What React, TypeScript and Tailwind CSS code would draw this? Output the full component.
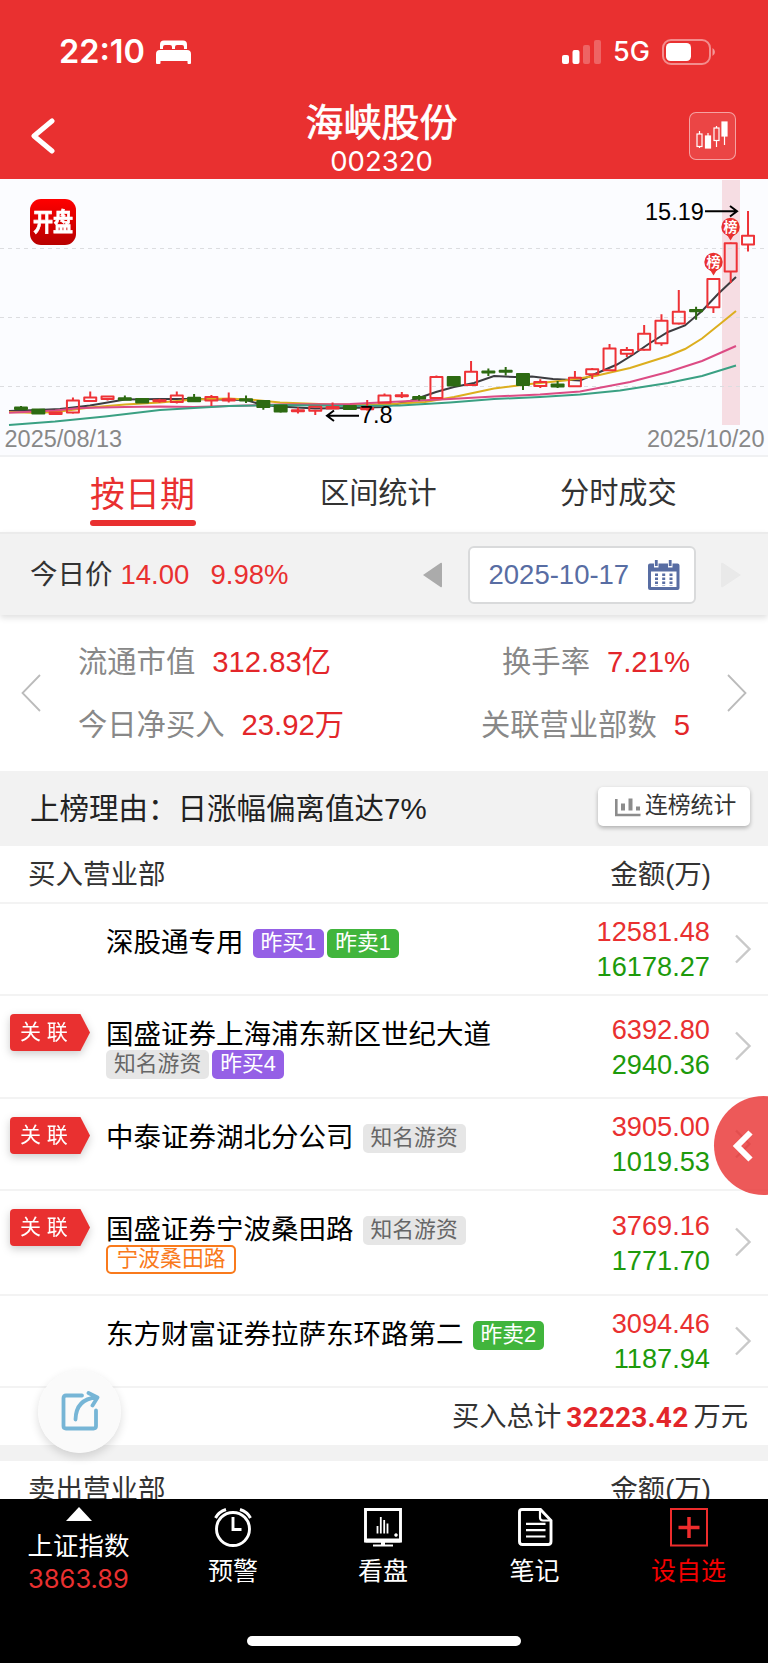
import React from 'react';

interface Candle {
  top: number;
  bottom: number;
  high: number;
  low: number;
  up: boolean;
}

interface Tag {
  text: string;
  kind: 'buy' | 'sell' | 'known' | 'group';
}

interface Seat {
  name: string;
  linked: boolean;
  inlineTags: Tag[];
  belowTags: Tag[];
  buy: string;
  sell: string;
  height: string;
}

const c = (up: boolean, top: number, bottom: number, high = top, low = bottom): Candle => ({
  up,
  top,
  bottom,
  high,
  low,
});

const candles: Candle[] = [
  c(false, 227.5, 229, 226, 230),
  c(false, 229.5, 233.5),
  c(true, 232.5, 234),
  c(true, 220.5, 232.5, 217.5, 233.5),
  c(true, 217.5, 221, 211.5, 222),
  c(true, 216.5, 219, 216, 220.5),
  c(false, 218.3, 219.7, 215.5, 220),
  c(false, 219, 222.5),
  c(true, 220.3, 221.3, 218.7, 222.7),
  c(true, 215.5, 222, 211.5, 223.5),
  c(false, 217.7, 221.3, 214, 222),
  c(true, 217, 220.5, 215, 226),
  c(true, 219.3, 220.5, 212.5, 222.5),
  c(false, 219.2, 220.4, 215.5, 223),
  c(false, 221, 227, 220, 229.7),
  c(false, 225.5, 231.5, 225, 232.5),
  c(true, 230.3, 231.3, 227.5, 233.5),
  c(true, 226.7, 230.7, 226, 235),
  c(true, 227, 228.5, 222.5, 229),
  c(false, 226, 229),
  c(true, 228, 229.3, 220, 230.5),
  c(true, 215.5, 222.7, 213.5, 223),
  c(true, 215.2, 216.2, 212, 218),
  c(false, 217, 218.5, 215, 220.5),
  c(true, 197, 218, 195.5, 219),
  c(false, 197, 205.5),
  c(true, 191.7, 205, 181, 206),
  c(false, 191.5, 192.5, 188.5, 196),
  c(false, 190.8, 191.8, 187, 195.5),
  c(false, 194, 205, 193, 210),
  c(true, 202, 206, 199.3, 208),
  c(false, 204.5, 206.5, 201, 208),
  c(true, 197.7, 206.3, 191, 207),
  c(true, 189.3, 194.3, 188, 199),
  c(true, 168.5, 190.3, 164, 191),
  c(true, 170, 173.7, 167, 177),
  c(true, 153.7, 169.7, 145, 170.5),
  c(true, 140.7, 163.3, 134.3, 165.7),
  c(true, 131.7, 143.5, 110, 144.5),
  c(false, 130, 131.3, 126.7, 139.7),
  c(true, 99, 127.3, 98, 133),
  c(true, 63.3, 91.5, 62.5, 103),
  c(true, 55.7, 64.5, 31, 71.5),
];

const averages = [
  {
    color: '#3c3c40',
    points:
      '9,231 38,230 60,229 90,225.5 125,219.5 160,219 194,219 246,220 263,225 280,226.5 315,228.5 350,228 384,227 410,221 436,212 454,207 474,203 494,196 515,197 532,196.5 553,199 580,200.5 595,194 617,184.5 634,174 650,163 668,152 685,145.5 702,131 718,114 736,97',
  },
  {
    color: '#dcae1e',
    points:
      '9,232 38,233 60,231.5 90,227.5 125,224.5 160,222.5 194,219.5 229,218.5 255,220 280,222.5 332,224.5 384,224.5 425,222 454,217 494,208.5 530,204 565,200.5 595,196 630,188 668,176 685,169 702,158.5 720,144 736,131',
  },
  {
    color: '#dc4b84',
    points:
      '9,232.7 55,230.5 80,228 125,227 160,226.5 194,227 229,226 280,224.5 350,224 400,221.5 450,219 494,216.5 540,214.5 580,211.5 630,202 668,192 702,181 736,166',
  },
  {
    color: '#3aa083',
    points:
      '9,245 55,241.5 105,236.5 160,230 194,228 229,226 280,225 350,226 400,225.5 450,222.5 494,219 540,217 580,214.5 620,210.5 668,203 702,196 736,185.5',
  },
];

const seats: Seat[] = [
  {
    name: '深股通专用',
    linked: false,
    inlineTags: [
      { text: '昨买1', kind: 'buy' },
      { text: '昨卖1', kind: 'sell' },
    ],
    belowTags: [],
    buy: '12581.48',
    sell: '16178.27',
    height: 'h-[92px]',
  },
  {
    name: '国盛证券上海浦东新区世纪大道',
    linked: true,
    inlineTags: [],
    belowTags: [
      { text: '知名游资', kind: 'known' },
      { text: '昨买4', kind: 'buy' },
    ],
    buy: '6392.80',
    sell: '2940.36',
    height: 'h-[103px]',
  },
  {
    name: '中泰证券湖北分公司',
    linked: true,
    inlineTags: [{ text: '知名游资', kind: 'known' }],
    belowTags: [],
    buy: '3905.00',
    sell: '1019.53',
    height: 'h-[92px]',
  },
  {
    name: '国盛证券宁波桑田路',
    linked: true,
    inlineTags: [{ text: '知名游资', kind: 'known' }],
    belowTags: [{ text: '宁波桑田路', kind: 'group' }],
    buy: '3769.16',
    sell: '1771.70',
    height: 'h-[105px]',
  },
  {
    name: '东方财富证券拉萨东环路第二',
    linked: false,
    inlineTags: [{ text: '昨卖2', kind: 'sell' }],
    belowTags: [],
    buy: '3094.46',
    sell: '1187.94',
    height: 'h-[92px]',
  },
];

const tagStyles = {
  buy: 'bg-[#9560e6] text-white px-2',
  sell: 'bg-[#41b53c] text-white px-2',
  known: 'bg-[#e6e6e6] text-[#666] px-2',
  group: 'border-2 border-[#f97a1c] text-[#f97a1c] bg-white px-[8.500px]',
};

const StatusBar: React.FC = () => (
  <div className="flex h-[104px] items-center px-[59px] text-white font-['Inter',sans-serif]">
    <span className="w-[86px] text-[32.500px] font-semibold leading-none">22:10</span>
    <svg className="ml-[11px]" width="35" height="24" viewBox="0 0 35 24" fill="#fff">
      <path d="M4 9V4.500a4 4 0 0 1 4-4h19a4 4 0 0 1 4 4V9h-3V7a2 2 0 0 0-2-2h-5a2 2 0 0 0-2 2v2h-3V7a2 2 0 0 0-2-2H9a2 2 0 0 0-2 2v2z" />
      <path d="M0 23V14a4 4 0 0 1 4-4h27a4 4 0 0 1 4 4v9a1 1 0 0 1-1 1h-1.500a1 1 0 0 1-1-1v-2h-27v2a1 1 0 0 1-1 1H1a1 1 0 0 1-1-1z" />
    </svg>
    <svg className="ml-auto" width="39" height="24" viewBox="0 0 39 24" fill="#fff">
      <rect x="0" y="15" width="7" height="9" rx="2" />
      <rect x="10.500" y="10" width="7" height="14" rx="2" />
      <rect x="21" y="5" width="7" height="19" rx="2" opacity=".25" />
      <rect x="32" y="0" width="7" height="24" rx="2" opacity=".25" />
    </svg>
    <span className="ml-3 w-9 text-[27px] font-medium leading-[30px]">5G</span>
    <svg className="ml-[13px] -mr-[7px]" width="54" height="26" viewBox="0 0 54 26">
      <rect x="1" y="1" width="47" height="24" rx="8" fill="none" stroke="#fff" strokeOpacity=".45" strokeWidth="2" />
      <rect x="4" y="4" width="25" height="18" rx="4.500" fill="#fff" />
      <path d="M50.500 9a4.500 4.500 0 0 1 0 8z" fill="#fff" fillOpacity=".5" />
    </svg>
  </div>
);

const TitleBar: React.FC = () => (
  <div className="flex h-[75px] items-start justify-between pl-[30px] pr-8 text-white">
    <svg className="mt-[14px]" width="44" height="36" viewBox="0 0 44 36" fill="none">
      <path d="M22 3L4 18l18 15" stroke="#fff" strokeWidth="5" strokeLinecap="round" strokeLinejoin="round" />
    </svg>
    <div className="flex flex-col items-center">
      <h1 className="-mt-[2px] text-[38px] leading-[42px] [-webkit-text-stroke:0.7px_white]">海峡股份</h1>
      <span className="mt-[2px] text-[27.500px] leading-[30px] font-['Inter',sans-serif]">002320</span>
    </div>
    <div className="mt-2 flex h-12 w-[47px] items-center justify-center rounded-[7px] border border-white/50 bg-white/10">
      <svg width="32" height="30" viewBox="0 0 32 30" fill="none" stroke="#fff" strokeWidth="1.200">
        <path d="M3.500 10v3M3.500 26v1M20.500 5v2M20.500 20v6M12 12v3M28.500 14v10" />
        <rect x="1" y="13" width="5" height="12.500" />
        <rect x="9.500" y="15" width="5" height="12" fill="#fff" />
        <rect x="18" y="7" width="5" height="12.500" />
        <rect x="26" y="1" width="5" height="14" fill="#fff" />
      </svg>
    </div>
  </div>
);

const ListMarker: React.FC<{ x: number; y: number }> = ({ x, y }) => (
  <g>
    <path d={`M${x - 4} ${y + 7}L${x} ${y + 13.5}L${x + 4} ${y + 7}z`} fill="#e93030" />
    <circle cx={x} cy={y} r="9.200" fill="#e93030" />
    <text
      x={x}
      y={y + 5}
      fontSize="14"
      fontWeight="700"
      textAnchor="middle"
      fill="#fff"
      fontFamily="Noto Sans CJK SC, sans-serif"
    >
      榜
    </text>
  </g>
);

const KLineChart: React.FC = () => (
  <div className="relative h-[278px] shrink-0 border-b-2 border-[#f0f1f3] bg-[#fbfcff] pt-px">
    <svg width="768" height="275" viewBox="0 0 768 275" fontFamily="Liberation Sans, sans-serif" fontSize="23.500">
      <rect x="722" y="0" width="18" height="245" fill="#f6dde3" />
      {[68.5, 137.5, 206.5].map((y) => (
        <line key={y} x1="0" x2="768" y1={y} y2={y} stroke="#dcdde0" strokeDasharray="4 4" />
      ))}
      {averages.map((line) => (
        <polyline key={line.color} points={line.points} fill="none" stroke={line.color} strokeWidth="2" />
      ))}
      {candles.map((candle, i) => {
        const x = 21 + i * 17.31;
        const color = candle.up ? '#ee3237' : '#2d6a12';
        return (
          <g key={i} stroke={color} strokeWidth="2">
            <path d={`M${x} ${candle.high}V${candle.top}M${x} ${candle.bottom}V${candle.low}`} />
            <rect
              x={x - 6}
              y={candle.top}
              width="12"
              height={candle.bottom - candle.top}
              fill={candle.up ? 'none' : color}
              strokeLinejoin="round"
            />
          </g>
        );
      })}
      <ListMarker x={713.5} y={82} />
      <ListMarker x={730.5} y={47} />
      <text x="645" y="39.500">15.19</text>
      <path d="M705 31.300H736M730 26L737 31.300L730 36.500" fill="none" stroke="#000" strokeWidth="2" />
      <text x="360" y="243.300">7.8</text>
      <path d="M359 235.700H328M334 230.500L327 235.700L334 241" fill="none" stroke="#000" strokeWidth="2" />
      <text x="4.500" y="267" fill="#888">2025/08/13</text>
      <text x="764.500" y="267" fill="#888" textAnchor="end">2025/10/20</text>
    </svg>
    <div className="absolute left-[30px] top-5 flex h-[46px] w-[46px] items-center justify-center rounded-[11px] bg-gradient-to-b from-[#ff0000] to-[#b80000] text-[20px] font-bold leading-none text-white">
      <span className="scale-y-125 whitespace-nowrap [-webkit-text-stroke:0.6px_white]">开盘</span>
    </div>
  </div>
);

const Tabs: React.FC = () => (
  <div className="flex h-[75px] shrink-0 bg-white pl-[90px] text-[29.200px] leading-[72px] text-[#333]">
    <div className="flex w-[106px] flex-col text-[35px] leading-[76px] text-[#e93030]">
      <span className="h-[63px]">按日期</span>
      <span className="h-[6px] rounded-full bg-[#e93030]" />
    </div>
    <span className="ml-[124px] w-[117px]">区间统计</span>
    <span className="ml-[123px]">分时成交</span>
  </div>
);

const DateBar: React.FC = () => (
  <div className="relative flex h-[83px] shrink-0 items-center border-t-2 border-[#ebebeb] bg-[#f2f2f2] pl-[30px] text-[28px] shadow-[0_3px_6px_rgba(0,0,0,0.12)]">
    <span className="text-[27.500px] text-[#333]">今日价</span>
    <span className="ml-2 w-[70px] text-[27.500px] text-[#e93030]">14.00</span>
    <span className="ml-5 w-[80px] text-[27.500px] text-[#e93030]">9.98%</span>
    <svg className="ml-[131px]" width="20" height="26" viewBox="0 0 20 26">
      <path d="M1 13L18.500 1Q20 0 20 2V24Q20 26 18.500 25z" fill="#ababab" />
    </svg>
    <div className="ml-[26px] flex h-[58px] w-[228px] items-center rounded-md border-2 border-[#d9dadb] bg-white pl-[19px] text-[#586da3]">
      <span className="w-[142px] text-[27.500px]">2025-10-17</span>
      <svg className="ml-[17px]" width="32" height="30" viewBox="0 0 32 30">
        <path
          d="M2 3.500H6V7.500H10.500V3.500H20V7.500H24.500V3.500H29.500Q31.500 3.500 31.500 5.500V28Q31.500 30 29.500 30H2Q0 30 0 28V5.500Q0 3.500 2 3.500zM3 11.500V27H28.500V11.500z"
          fill="#586da3"
          fillRule="evenodd"
        />
        <path d="M8.300 0V6M22.200 0V6" stroke="#586da3" strokeWidth="2.800" />
        <path d="M8.500 13.500V26M15.700 13.500V26M23 13.500V26" stroke="#586da3" strokeWidth="3" strokeDasharray="2.500 1.500" />
      </svg>
    </div>
    <svg className="ml-[25px]" width="21" height="26" viewBox="0 0 21 26">
      <path d="M0 2Q0 0 2 1L20 13L2 25Q0 26 0 24z" fill="#e9e9e9" />
    </svg>
  </div>
);

const Stat: React.FC<{ label: string; value: string }> = ({ label, value }) => (
  <div className="flex gap-[17px]">
    <span className="text-[#888]">{label}</span>
    <span className="text-[#e3262a]">{value}</span>
  </div>
);

const Stats: React.FC = () => (
  <div className="flex h-[156px] shrink-0 items-center justify-between bg-white px-[21px]">
    <svg width="20" height="38" viewBox="0 0 20 38" fill="none">
      <path d="M19 1L1.500 19L19 37" stroke="#bbb" strokeWidth="1.800" />
    </svg>
    <div className="mt-px flex w-[612px] flex-col gap-[23px] text-[29.300px] leading-[40px]">
      <div className="flex justify-between">
        <Stat label="流通市值" value="312.83亿" />
        <Stat label="换手率" value="7.21%" />
      </div>
      <div className="flex justify-between">
        <Stat label="今日净买入" value="23.92万" />
        <Stat label="关联营业部数" value="5" />
      </div>
    </div>
    <svg width="20" height="38" viewBox="0 0 20 38" fill="none">
      <path d="M1 1L18.500 19L1 37" stroke="#bbb" strokeWidth="1.800" />
    </svg>
  </div>
);

const ReasonBar: React.FC = () => (
  <div className="flex h-[75px] shrink-0 items-start justify-between bg-[#f2f2f2] pl-[30px] pr-[18px] text-[29.500px] text-[#222]">
    <span className="leading-[76px]">上榜理由：日涨幅偏离值达7%</span>
    <button className="mt-4 flex h-[39px] w-[152px] items-center rounded-[5px] bg-white pl-[17px] text-[22.800px] leading-none text-[#333] shadow-[0_2px_4px_rgba(0,0,0,0.28)]">
      <svg width="26" height="20" viewBox="0 0 26 20" fill="none" stroke="#8c8c8c">
        <path d="M1.300 2V18H25.500" strokeWidth="2.600" />
        <path d="M8 6.500V13.500M15.500 1.500V13.500M23 9.500V13.500" strokeWidth="4" />
      </svg>
      <span className="-mt-[2px] ml-1">连榜统计</span>
    </button>
  </div>
);

const SectionHeader: React.FC<{ title: string }> = ({ title }) => (
  <div className="flex h-[58px] shrink-0 justify-between border-b-2 border-[#f3f3f3] bg-white pl-[28px] pr-[57px] text-[27.500px] leading-[58px] text-[#333]">
    <span>{title}</span>
    <span>金额(万)</span>
  </div>
);

const TagBadge: React.FC<{ tag: Tag }> = ({ tag }) => (
  <span className={`flex h-[29px] items-center rounded-[5px] text-[21.800px] leading-none ${tagStyles[tag.kind]}`}>
    <span className="-mt-[2px]">{tag.text}</span>
  </span>
);

const LinkedFlag: React.FC = () => (
  <div className="mt-[18px] w-20 drop-shadow-[0_3px_4px_rgba(0,0,0,0.2)]">
    <div className="h-[37px] rounded-l-[4px] bg-[#e93030] pl-[10px] text-[21px] leading-[36px] text-white [clip-path:polygon(0_0,88%_0,100%_50%,88%_100%,0_100%)]">
      关 联
    </div>
  </div>
);

const SeatRow: React.FC<{ seat: Seat }> = ({ seat }) => (
  <div className={`flex shrink-0 border-b-2 border-[#f3f3f3] bg-white pl-[10px] ${seat.height}`}>
    <div className="w-24">{seat.linked && <LinkedFlag />}</div>
    <div className="flex flex-1 flex-col pt-[23px]">
      <div className="flex gap-[3px] text-[27.500px] leading-[31px] text-black">
        <span className="mr-[6px]">{seat.name}</span>
        {seat.inlineTags.map((tag) => (
          <div key={tag.text} className="pt-[2px]">
            <TagBadge tag={tag} />
          </div>
        ))}
      </div>
      <div className="flex gap-[3px]">
        {seat.belowTags.map((tag) => (
          <TagBadge key={tag.text} tag={tag} />
        ))}
      </div>
    </div>
    <div className="flex flex-col items-end justify-center text-[27.200px] leading-[35px]">
      <span className="text-[#e93030]">{seat.buy}</span>
      <span className="text-[#1d9a0b]">{seat.sell}</span>
    </div>
    <svg className="mb-px ml-6 mr-4 self-center" width="18" height="30" viewBox="0 0 18 30" fill="none">
      <path d="M2 1.500L15.500 15L2 28.500" stroke="#c9c9c9" strokeWidth="2.400" />
    </svg>
  </div>
);

const NavItem: React.FC<{ label: string; className: string; children: React.ReactNode }> = ({
  label,
  className,
  children,
}) => (
  <div className={`flex flex-col items-center pt-[8px] ${className}`}>
    <svg width="40" height="40" viewBox="0 0 40 40" fill="none" stroke="currentColor" strokeWidth="2.900">
      {children}
    </svg>
    <span className="mt-[6px] text-[25px] leading-[36px]">{label}</span>
  </div>
);

const BottomNav: React.FC = () => (
  <div className="relative flex h-[164px] shrink-0 flex-col bg-black text-white">
    <div className="flex h-[137px]">
      <div className="flex w-[157px] flex-col items-center pt-[8px]">
        <svg width="26" height="14" viewBox="0 0 26 14">
          <path d="M13 0L26 14H0z" fill="#fff" />
        </svg>
        <span className="mt-[7px] text-[25.500px] leading-[36px]">上证指数</span>
        <span className="text-[25.500px] leading-[29px] text-[#e93030] font-['Inter',sans-serif]">3863.89</span>
      </div>
      <NavItem label="预警" className="w-[152px]">
        <circle cx="20" cy="22" r="16.500" />
        <path d="M20 10V22.500H28.500" />
        <path d="M2.500 11Q5.500 5 13 2.500M37.500 11Q34.500 5 27 2.500" />
      </NavItem>
      <NavItem label="看盘" className="w-[148px]">
        <path d="M2.500 2.500H37.500V34H2.500z" />
        <path d="M2.500 33.500H37.500" strokeWidth="4" />
        <path d="M20 34V38" strokeWidth="4" />
        <path d="M10 38.500H30" strokeWidth="2" />
        <path d="M14.500 19V26.500M17.800 10V26.500M21.200 13V26.500M24.500 16.500V26.500" strokeWidth="1.800" />
        <circle cx="33" cy="28" r="1.500" fill="currentColor" strokeWidth="0.500" />
      </NavItem>
      <NavItem label="笔记" className="w-[155px]">
        <path d="M7 2.500H25.500L36 13.500V34.500Q36 37.500 33 37.500H7.500Q4.500 37.500 4.500 34.500V5Q4.500 2.500 7 2.500z" />
        <path d="M25 3V10.500Q25 13.500 28 13.500H36M11 16.800H30.500M11 23.200H30.500M11 29.500H30.500" strokeWidth="2.200" />
      </NavItem>
      <NavItem label="设自选" className="w-[153px] text-[#f50000]">
        <rect x="2" y="2" width="36" height="36.500" stroke="#ee2c2c" strokeWidth="2" />
        <path d="M20 10V31M9.500 20.500H30.500" stroke="#ee2c2c" strokeWidth="3.500" />
      </NavItem>
    </div>
    <div className="mx-auto h-[10px] w-[274px] rounded-full bg-white" />
  </div>
);

const App: React.FC = () => {
  return (
    <div className="relative flex h-[1663px] w-[768px] flex-col overflow-hidden bg-white font-['Liberation_Sans','Noto_Sans_CJK_SC',sans-serif]">
      <header className="h-[179px] shrink-0 bg-[#e93030]">
        <StatusBar />
        <TitleBar />
      </header>

      <main className="flex h-[1320px] shrink-0 flex-col overflow-hidden">
        <KLineChart />
        <Tabs />
        <DateBar />
        <Stats />
        <ReasonBar />
        <SectionHeader title="买入营业部" />
        {seats.map((seat) => (
          <SeatRow key={seat.name} seat={seat} />
        ))}
        <div className="flex h-[57px] shrink-0 items-center justify-end pr-[20px] pt-[2px] text-[27.300px] text-[#333]">
          <span>买入总计</span>
          <span className="ml-[5px] mr-[5px] text-[28px] font-bold tracking-[0.200px] text-[#e3262a] font-['Roboto',sans-serif]">
            32223.42
          </span>
          <span>万元</span>
        </div>
        <div className="h-4 shrink-0 bg-[#f2f2f2]" />
        <SectionHeader title="卖出营业部" />
      </main>

      <BottomNav />

      <button className="absolute left-[714px] top-[1096px] flex h-[99px] w-[99px] items-center rounded-full bg-[#e93030]/80 pl-[18px]">
        <svg width="22" height="32" viewBox="0 0 22 32" fill="none">
          <path d="M18.500 2.500L5 16L18.500 29.500" stroke="#fff" strokeWidth="6" />
        </svg>
      </button>

      <button className="absolute left-[38px] top-[1370px] flex h-[83px] w-[83px] items-center justify-center rounded-full bg-[#fafafa]/95 shadow-[0_4px_10px_rgba(0,0,0,0.14)]">
        <svg width="40" height="42" viewBox="0 0 40 42" fill="none" stroke="#76b5d6" strokeWidth="3.800" strokeLinecap="round">
          <path d="M22 4.500H6Q3.500 4.500 3.500 7V35Q3.500 37.500 6 37.500H33.500Q36 37.500 36 35V19.500" />
          <path d="M15.500 28.500Q16 8 36.500 6.500M28.500 2L37.500 6.500L32.500 14.500" strokeLinejoin="round" />
        </svg>
      </button>
    </div>
  );
};

export default App;
